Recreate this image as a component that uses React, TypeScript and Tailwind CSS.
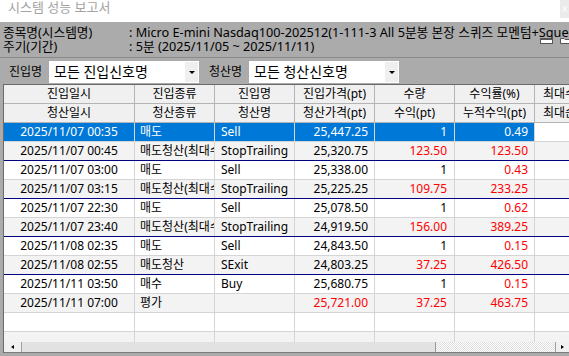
import React from 'react';

type Row = {
    date: string;
    kind: string;
    name: string;
    price: string;
    qty: string;
    ret: string;
    priceRed?: boolean;
    qtyRed?: boolean;
    retRed?: boolean;
    divider?: boolean;
    selected?: boolean;
};

const rows: Row[] = [
    { date: '2025/11/07 00:35', kind: '매도', name: 'Sell', price: '25,447.25', qty: '1', ret: '0.49', selected: true },
    { date: '2025/11/07 00:45', kind: '매도청산(최대수익대비하락)', name: 'StopTrailing', price: '25,320.75', qty: '123.50', ret: '123.50', qtyRed: true, retRed: true, divider: true },
    { date: '2025/11/07 03:00', kind: '매도', name: 'Sell', price: '25,338.00', qty: '1', ret: '0.43', retRed: true },
    { date: '2025/11/07 03:15', kind: '매도청산(최대수익대비하락)', name: 'StopTrailing', price: '25,225.25', qty: '109.75', ret: '233.25', qtyRed: true, retRed: true, divider: true },
    { date: '2025/11/07 22:30', kind: '매도', name: 'Sell', price: '25,078.50', qty: '1', ret: '0.62', retRed: true },
    { date: '2025/11/07 23:40', kind: '매도청산(최대수익대비하락)', name: 'StopTrailing', price: '24,919.50', qty: '156.00', ret: '389.25', qtyRed: true, retRed: true, divider: true },
    { date: '2025/11/08 02:35', kind: '매도', name: 'Sell', price: '24,843.50', qty: '1', ret: '0.15', retRed: true },
    { date: '2025/11/08 02:55', kind: '매도청산', name: 'SExit', price: '24,803.25', qty: '37.25', ret: '426.50', qtyRed: true, retRed: true, divider: true },
    { date: '2025/11/11 03:50', kind: '매수', name: 'Buy', price: '25,680.75', qty: '1', ret: '0.15', retRed: true },
    { date: '2025/11/11 07:00', kind: '평가', name: '', price: '25,721.00', qty: '37.25', ret: '463.75', priceRed: true, qtyRed: true, retRed: true },
    { date: '', kind: '', name: '', price: '', qty: '', ret: '' },
    { date: '', kind: '', name: '', price: '', qty: '', ret: '' },
];

function Combo({ text }: { text: string }) {
    return (
        <div className="w-[150px] h-[22px] bg-white flex items-center shrink-0">
            <span className="flex-1 pl-[5px] text-[14px] leading-[22px] whitespace-nowrap overflow-hidden">{text}</span>
            <div className="w-[13px] h-[20px] mr-[1px] bg-[#efefef] flex items-center justify-center">
                <div className="w-0 h-0 border-l-[3px] border-r-[3px] border-t-[3px] border-l-transparent border-r-transparent border-t-black" />
            </div>
        </div>
    );
}

function HeaderRow({ cells }: { cells: string[] }) {
    return (
        <div className="flex h-[19px] border-b border-[#b4b4b4] bg-[#f0f0f0] shrink-0">
            {cells.map((c, i) => (
                <div
                    key={i}
                    className={`${i === 0 ? 'w-[131px]' : 'w-[80px]'} shrink-0 border-r border-[#b4b4b4] text-center text-[12px] leading-[18px] whitespace-nowrap overflow-hidden`}
                >
                    {c}
                </div>
            ))}
        </div>
    );
}

function DataRow({ row, index }: { row: Row; index: number }) {
    const base = index % 2 === 1 ? 'bg-[#f3f3f3]' : 'bg-white';
    const bg = row.selected ? 'bg-[#0078d7]' : base;
    const color = (on?: boolean) => (row.selected ? 'text-white' : on ? 'text-[#ff0000]' : 'text-black');
    const cell = 'shrink-0 border-r border-[#d5d5d5] text-[12px] leading-[18px] whitespace-nowrap overflow-hidden';

    return (
        <div className={`flex h-[19px] border-b shrink-0 ${row.divider ? 'border-[#000080]' : 'border-[#d5d5d5]'}`}>
            <div className={`${cell} w-[131px] text-center ${bg} ${color()}`}>{row.date}</div>
            <div className={`${cell} w-[80px] pl-[5px] ${bg} ${color()}`}>{row.kind}</div>
            <div className={`${cell} w-[80px] pl-[6px] ${bg} ${color()}`}>{row.name}</div>
            <div className={`${cell} w-[80px] text-right pr-[6px] ${bg} ${color(row.priceRed)}`}>{row.price}</div>
            <div className={`${cell} w-[80px] text-right pr-[7px] ${bg} ${color(row.qtyRed)}`}>{row.qty}</div>
            <div className={`${cell} w-[80px] text-right pr-[6px] ${bg} ${color(row.retRed)}`}>{row.ret}</div>
            <div className={`${cell} w-[80px] ${base}`}></div>
        </div>
    );
}

export default function App() {
    return (
        <div className="w-[569px] h-[356px] overflow-hidden bg-[#ababab] flex flex-col font-['Noto_Sans','Noto_Sans_CJK_KR',sans-serif] text-black">
            {/* Title bar */}
            <div className="h-[22px] bg-white flex items-start shrink-0">
                <span className="pl-[8px] text-[13px] leading-[15px] text-[#a3a3a3] whitespace-nowrap">시스템 성능 보고서</span>
                <div className="ml-auto w-[9px] h-[18px] bg-[#ebebeb] overflow-hidden text-[10px] leading-[16px] text-white pl-[2px]">x</div>
            </div>

            {/* Info */}
            <div className="h-[36px] relative pl-[3px] pt-[3px] border-b border-[#8a8a8a] shrink-0 text-[12.7px] leading-[14px] whitespace-nowrap overflow-hidden">
                <div className="flex">
                    <span className="w-[126px] shrink-0">종목명(시스템명)</span>
                    <span>: Micro E-mini Nasdaq100-202512(1-111-3 All 5분봉 본장 스퀴즈 모멘텀+Squeeze)</span>
                </div>
                <div className="flex">
                    <span className="w-[126px] shrink-0">주기(기간)</span>
                    <span>: 5분 (2025/11/05 ~ 2025/11/11)</span>
                </div>
                <div className="absolute left-[540px] top-[16px] flex gap-[7px]">
                    <svg width="13" height="6" viewBox="0 0 13 6">
                        <rect x="0.5" y="0.5" width="12" height="5" fill="#ffffff" stroke="#555555" />
                        <rect x="0" y="0" width="13" height="2" fill="#555555" />
                    </svg>
                    <svg width="12" height="6" viewBox="0 0 12 6">
                        <path d="M0.5 5.5 V0.5 H4 L5 1.5 H11.5 V5.5 Z" fill="#ffffff" stroke="#555555" />
                    </svg>
                </div>
            </div>

            {/* Filter */}
            <div className="h-[26px] pt-[3px] pl-[9px] flex items-start gap-[4px] shrink-0 text-[12px]">
                <span className="w-[36px] leading-[22px] whitespace-nowrap">진입명</span>
                <Combo text="모든 진입신호명" />
                <span className="ml-[6px] w-[36px] leading-[22px] whitespace-nowrap">청산명</span>
                <Combo text="모든 청산신호명" />
            </div>

            {/* Grid */}
            <div className="ml-[3px] w-[566px] h-[269px] border-l border-t border-[#6a6a6a] flex flex-col overflow-hidden shrink-0">
                <div className="flex-1 overflow-hidden flex flex-col w-[611px]">
                    <HeaderRow cells={['진입일시', '진입종류', '진입명', '진입가격(pt)', '수량', '수익률(%)', '최대수익(pt)']} />
                    <HeaderRow cells={['청산일시', '청산종류', '청산명', '청산가격(pt)', '수익(pt)', '누적수익(pt)', '최대손실(pt)']} />
                    {rows.map((r, i) => (
                        <DataRow key={i} row={r} index={i} />
                    ))}
                </div>

                {/* Horizontal scrollbar */}
                <div className="h-[11px] flex shrink-0 border-b border-[#7a7a7a] bg-[#f0f0f0]">
                    <div className="w-[18px] border-r border-[#a0a0a0] flex items-center justify-center">
                        <div className="w-0 h-0 border-t-[2px] border-b-[2px] border-r-[3px] border-t-transparent border-b-transparent border-r-black" />
                    </div>
                    <div className="w-[414px] bg-[#e2e2e2] border-r border-[#9a9a9a]" />
                    <div className="flex-1 bg-[repeating-conic-gradient(#ffffff_0_25%,#dcdcdc_0_50%)] bg-[length:2px_2px]" />
                    <div className="w-[14px] border-l border-[#a0a0a0] flex items-center justify-center">
                        <div className="w-0 h-0 border-t-[2px] border-b-[2px] border-l-[3px] border-t-transparent border-b-transparent border-l-black" />
                    </div>
                </div>
            </div>
        </div>
    );
}
